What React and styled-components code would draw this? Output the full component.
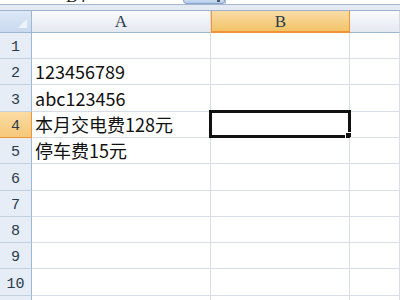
import React from 'react';
import styled, { createGlobalStyle, css } from 'styled-components';

const Global = createGlobalStyle`
  html, body { margin:0; padding:0; background:#fff; overflow:hidden; }
  body { width:400px; height:300px; }
`;

const Page = styled.div`
  width:400px;
  height:300px;
  overflow:hidden;
  background:#fff;
`;

const TopBar = styled.div`
  height:4px;
  display:flex;
  background:#fff;
  border-bottom:1px solid #a7b6ca;
`;

const NameBox = styled.div`
  width:183px;
  height:4px;
  overflow:hidden;
  position:relative;
  font-family:"Liberation Serif", serif;
  font-size:17px;
  color:#222;
`;

const NameText = styled.span`
  position:absolute;
  left:66px;
  bottom:-1px;
  line-height:17px;
`;

const Expander = styled.div`
  width:42px;
  height:4px;
  background:linear-gradient(#c9daf0,#b3cbea);
  border:1px solid #8aa6cc;
  border-top:none;
  border-radius:0 0 6px 10px;
  box-sizing:border-box;
  position:relative;
  &::after{
    content:'';
    position:absolute;
    right:4px;
    top:0;
    width:3px;
    height:2px;
    background:#556;
  }
`;

const Formula = styled.div`
  flex:1;
  border-left:1px solid #b7c3d3;
`;

const Strip = styled.div`
  height:5px;
  background:#e3eaf4;
  border-bottom:1px solid #9fb2cb;
`;

const Grid = styled.div`
  display:grid;
  grid-template-columns:32px 179px 139px 50px;
`;

const headBase = css`
  box-sizing:border-box;
  display:flex;
  align-items:center;
  justify-content:center;
  font-family:"Liberation Mono", monospace;
  color:#2a3b4c;
`;

const Corner = styled.div`
  ${headBase};
  height:22px;
  background:linear-gradient(#dde8f6,#c9d9ef);
  border-right:1px solid #9eb6ce;
  border-bottom:1px solid #9eb6ce;
  position:relative;
  &::after{
    content:'';
    position:absolute;
    right:4px;
    bottom:4px;
    border-left:9px solid transparent;
    border-bottom:9px solid #eef3fa;
  }
`;

const ColHead = styled.div`
  ${headBase};
  height:22px;
  font-family:"Liberation Serif", serif;
  font-size:17px;
  padding-top:1px;
  background:${p => p.$active
    ? 'linear-gradient(#f9dca6,#f2c468)'
    : 'linear-gradient(#f9fafc,#e4e9f1)'};
  border-right:1px solid ${p => p.$active ? '#f29436' : '#d5dbe4'};
  border-left:${p => p.$active ? '1px solid #f29436' : 'none'};
  border-bottom:${p => p.$active ? '2px solid #f29436' : '1px solid #9eb6ce'};
`;

const RowHead = styled.div`
  ${headBase};
  height:${p => p.$h}px;
  font-size:15px;
  padding-top:4px;
  background:${p => p.$active
    ? 'linear-gradient(#fbdca4,#f6c879)'
    : '#e6edf7'};
  border-right:1px solid ${p => p.$active ? '#f29436' : '#9eb6ce'};
  border-bottom:1px solid ${p => p.$active ? '#f29436' : '#c2cfdf'};
`;

const Cell = styled.div`
  box-sizing:border-box;
  height:${p => p.$h}px;
  border-right:1px solid #d8dde8;
  border-bottom:1px solid #d8dde8;
  display:flex;
  align-items:flex-end;
  padding:0 0 3px 3px;
  font-family:"Noto Sans CJK SC", monospace;
  font-size:18px;
  line-height:20px;
  color:#111;
  white-space:nowrap;
  position:relative;
`;

const Selection = styled.div`
  position:absolute;
  left:-2px;
  top:-2px;
  right:-2px;
  bottom:-1px;
  border:3px solid #111;
  pointer-events:none;
`;

const Handle = styled.div`
  position:absolute;
  right:-4px;
  bottom:-4px;
  width:5px;
  height:5px;
  background:#111;
  border:1px solid #fff;
`;

const rows = [
  { h: 26, a: '' },
  { h: 26, a: '123456789' },
  { h: 27, a: 'abc123456' },
  { h: 26, a: '本月交电费128元', active: true },
  { h: 26, a: '停车费15元' },
  { h: 27, a: '' },
  { h: 26, a: '' },
  { h: 26, a: '' },
  { h: 26, a: '' },
  { h: 27, a: '' },
  { h: 26, a: '' },
];

export default function App() {
  return (
    <Page>
      <Global />
      <TopBar>
        <NameBox><NameText>B4</NameText></NameBox>
        <Expander />
        <Formula />
      </TopBar>
      <Strip />
      <Grid>
        <Corner />
        <ColHead>A</ColHead>
        <ColHead $active>B</ColHead>
        <ColHead />
        {rows.map((r, i) => (
          <React.Fragment key={i}>
            <RowHead $h={r.h} $active={r.active}>{i + 1}</RowHead>
            <Cell $h={r.h}>{r.a}</Cell>
            <Cell $h={r.h}>
              {r.active && <Selection><Handle /></Selection>}
            </Cell>
            <Cell $h={r.h} />
          </React.Fragment>
        ))}
      </Grid>
    </Page>
  );
}
